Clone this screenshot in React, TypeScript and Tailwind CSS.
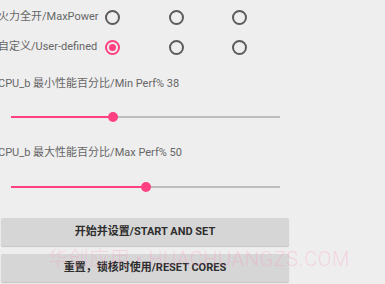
import React from 'react'

const font = { fontFamily: 'Roboto, "Noto Sans CJK SC", sans-serif' }

export default function App() {
  return (
    <div
      className="relative w-[385px] h-[284px] overflow-hidden bg-[#eeeeee] text-[11px] text-[#666666]"
      style={font}
    >
      <div className="pt-[2px] -ml-[2px]">
        <RadioRow label="火力全开/MaxPower" selected={-1} />
        <RadioRow label="自定义/User-defined" selected={0} />
      </div>

      <div className="h-[10px]" />
      <div className="h-[24px] flex items-center -ml-[2px]">CPU_b 最小性能百分比/Min Perf% 38</div>
      <Slider value={38} h="h-[42px]" />
      <div className="h-[30px] flex items-center -ml-[2px]">CPU_b 最大性能百分比/Max Perf% 50</div>
      <Slider value={50} h="h-[38px]" />

      <div className="pt-[12px] pl-[1px] w-[289px] flex flex-col gap-[8px]">
        <Button text="开始并设置/START AND SET" />
        <Button text="重置，锁核时使用/RESET CORES" />
      </div>

      {/* watermark */}
      <div className="absolute left-[48px] top-[247px] text-[20px] leading-[24px] tracking-[0.6px] font-light text-[#ff8fbf]/30 pointer-events-none whitespace-nowrap">
        华创应用 • HUACHUANGZS.COM
      </div>
    </div>
  )
}

function RadioRow({ label, selected }: { label: string; selected: number }) {
  return (
    <div className="h-[30px] flex items-center">
      <div className="w-[107px] whitespace-nowrap text-[11px]">{label}</div>
      {[0, 1, 2].map((i) => (
        <div key={i} className="w-[63.5px] flex items-center">
          {i === selected ? (
            <div className="w-[15px] h-[15px] rounded-full border-2 border-[#ff4081] flex items-center justify-center">
              <div className="w-[7px] h-[7px] rounded-full bg-[#ff4081]" />
            </div>
          ) : (
            <div className="w-[15px] h-[15px] rounded-full border-2 border-[#5c5c5c]" />
          )}
        </div>
      ))}
    </div>
  )
}

function Slider({ value, h }: { value: number; h: string }) {
  const width = 269
  const pos = (value / 100) * width
  return (
    <div className={`${h} flex items-center`}>
      <div className="relative ml-[11px] w-[269px] h-[2px] bg-[#bdbdbd]">
        <div className="absolute left-0 top-0 h-[2px] bg-[#ff4081]" style={{ width: pos }} />
        <div
          className="absolute top-[-4px] w-[10px] h-[10px] rounded-full bg-[#ff4081]"
          style={{ left: pos - 5 }}
        />
      </div>
    </div>
  )
}

function Button({ text }: { text: string }) {
  return (
    <div className="h-[28px] rounded-[2px] bg-[#d6d6d6] shadow-[0_1px_1px_rgba(0,0,0,0.18)] flex items-center justify-center font-bold text-[11px] text-[#2e2e2e]">
      {text}
    </div>
  )
}
